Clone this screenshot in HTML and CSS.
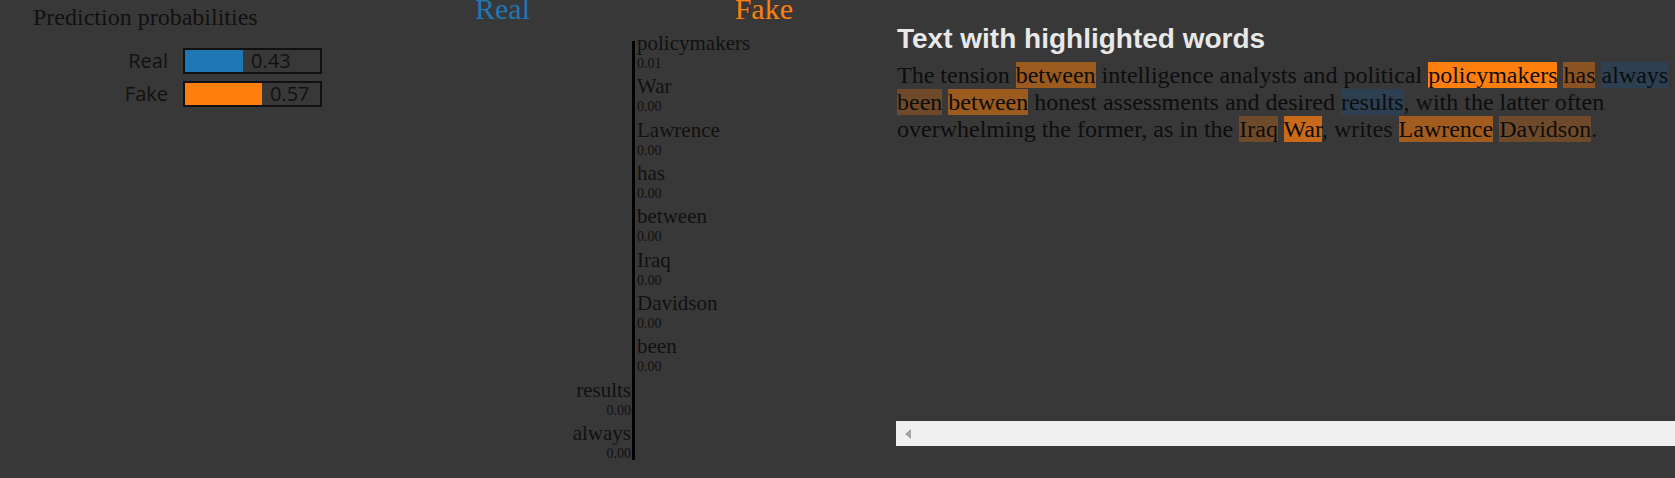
FILE: index.html
```html
<!DOCTYPE html>
<html>
<head>
<meta charset="utf-8">
<link rel="stylesheet" href="styles.css">
</head>
<body>
<div class="page">
  <section class="probs">
    <div class="probs-title">Prediction probabilities</div>
    <div class="prob-row">
      <div class="prob-label">Real</div>
      <div class="prob-bar"><div class="prob-fill real" style="width:43%"></div><span class="prob-val">0.43</span></div>
    </div>
    <div class="prob-row">
      <div class="prob-label">Fake</div>
      <div class="prob-bar"><div class="prob-fill fake" style="width:57%"></div><span class="prob-val">0.57</span></div>
    </div>
  </section>

  <section class="features">
    <div class="chart">
      <div class="chart-head">
        <span class="head-real">Real</span>
        <span class="head-fake">Fake</span>
      </div>
      <div class="feat-grid">
        <div class="axis"></div>
        <div class="feat pos"><div class="fname">policymakers</div><div class="fval">0.01</div></div>
        <div class="feat pos"><div class="fname">War</div><div class="fval">0.00</div></div>
        <div class="feat pos"><div class="fname">Lawrence</div><div class="fval">0.00</div></div>
        <div class="feat pos"><div class="fname">has</div><div class="fval">0.00</div></div>
        <div class="feat pos"><div class="fname">between</div><div class="fval">0.00</div></div>
        <div class="feat pos"><div class="fname">Iraq</div><div class="fval">0.00</div></div>
        <div class="feat pos"><div class="fname">Davidson</div><div class="fval">0.00</div></div>
        <div class="feat pos"><div class="fname">been</div><div class="fval">0.00</div></div>
        <div class="feat neg"><div class="fname">results</div><div class="fval">0.00</div></div>
        <div class="feat neg"><div class="fname">always</div><div class="fval">0.00</div></div>
      </div>
    </div>
  </section>

  <section class="textpanel">
    <h3 class="text-title">Text with highlighted words</h3>
    <div class="text-body">The tension <span class="hl h-between">between</span> intelligence analysts and political <span class="hl h-policy">policymakers</span> <span class="hl h-has">has</span> <span class="hl h-blue">always</span> <span class="hl h-low">been</span> <span class="hl h-between">between</span> honest assessments and desired <span class="hl h-blue">results</span>, with the latter often overwhelming the former, as in the <span class="hl h-low">Iraq</span> <span class="hl h-war">War</span>, writes <span class="hl h-lawrence">Lawrence</span> <span class="hl h-low">Davidson</span>.</div>
    <div class="scrollbar"><span class="scroll-arrow"></span></div>
  </section>
</div>
</body>
</html>
```

FILE: styles.css
```css
html, body {
  margin: 0;
  padding: 0;
  background: #383838;
  overflow: hidden;
}

.page {
  display: flex;
  width: 1675px;
  height: 478px;
  background: #383838;
  color: #111;
  font-family: "Liberation Serif", "Times New Roman", serif;
}

/* ---------- prediction probabilities ---------- */
.probs {
  width: 407px;
  flex: none;
  padding: 4px 0 0 33px;
}

.probs-title {
  font-size: 24px;
  line-height: 27.6px;
  margin-bottom: 16.4px;
}

.prob-row {
  display: flex;
  align-items: center;
  gap: 15px;
  margin-bottom: 7px;
  font-family: "Open Sans", "Noto Sans", sans-serif;
  font-size: 20px;
  color: #111;
}

.prob-label {
  width: 135px;
  text-align: right;
  line-height: 26px;
}

.prob-bar {
  width: 135px;
  height: 22px;
  border: 2px solid #111;
  display: flex;
  align-items: stretch;
}

.prob-fill {
  flex: none;
}
.prob-fill.real { background: #1f77b4; }
.prob-fill.fake { background: #ff7f0e; }

.prob-val {
  padding-left: 8px;
  line-height: 22px;
}

/* ---------- feature chart ---------- */
.features {
  width: 421px;
  flex: none;
  padding-left: 35px;
}

.chart {
  width: 318px;
}

.chart-head {
  display: flex;
  justify-content: space-between;
  font-size: 30px;
  line-height: 30px;
  margin-top: -6px;
  height: 30px;
  margin-bottom: 7.9px;
}

.head-real { color: #1f77b4; }
.head-fake { color: #ff7f0e; }

.feat-grid {
  display: grid;
  grid-template-columns: 157px 3px 1fr;
  grid-template-rows: repeat(10, 43.33px);
}

.axis {
  grid-column: 2;
  grid-row: 1 / -1;
  background: #000;
  margin: 9.1px 0 5.2px;
}

.feat {
  white-space: nowrap;
  color: #111;
}

.feat.pos {
  grid-column: 3;
  padding-left: 2px;
}

.feat.neg {
  grid-column: 1;
  text-align: right;
  padding-right: 1px;
}

.fname {
  font-size: 21px;
  line-height: 22px;
}

.fval {
  font-size: 14px;
  line-height: 20px;
}

/* ---------- text panel ---------- */
.textpanel {
  flex: 1;
  min-width: 0;
  height: 446px;
  display: flex;
  flex-direction: column;
  padding-top: 23.2px;
  box-sizing: border-box;
}

.text-title {
  margin: 0 0 6.4px;
  padding-left: 1px;
  font-family: "Liberation Sans", Arial, sans-serif;
  font-weight: bold;
  font-size: 28px;
  line-height: 32.2px;
  color: #e8e8e8;
}

.text-body {
  padding-left: 1px;
  width: 775px;
  font-size: 24px;
  line-height: 27px;
  color: #0d0d0d;
}

.h-policy { background: #ff7f0e; }
.h-between { background: #9b5a1e; }
.h-has { background: #8c5322; }
.h-lawrence { background: #a25c1e; }
.h-war { background: #c86a1a; }
.h-low { background: #6f4a2a; }
.h-blue { background: #2c4052; }

.scrollbar {
  margin-top: auto;
  height: 25px;
  background: #f0f0f0;
  display: flex;
  align-items: center;
  padding-left: 9px;
}

.scroll-arrow {
  width: 0;
  height: 0;
  border-top: 5.5px solid transparent;
  border-bottom: 5.5px solid transparent;
  border-right: 6px solid #a3a3a3;
}
```
